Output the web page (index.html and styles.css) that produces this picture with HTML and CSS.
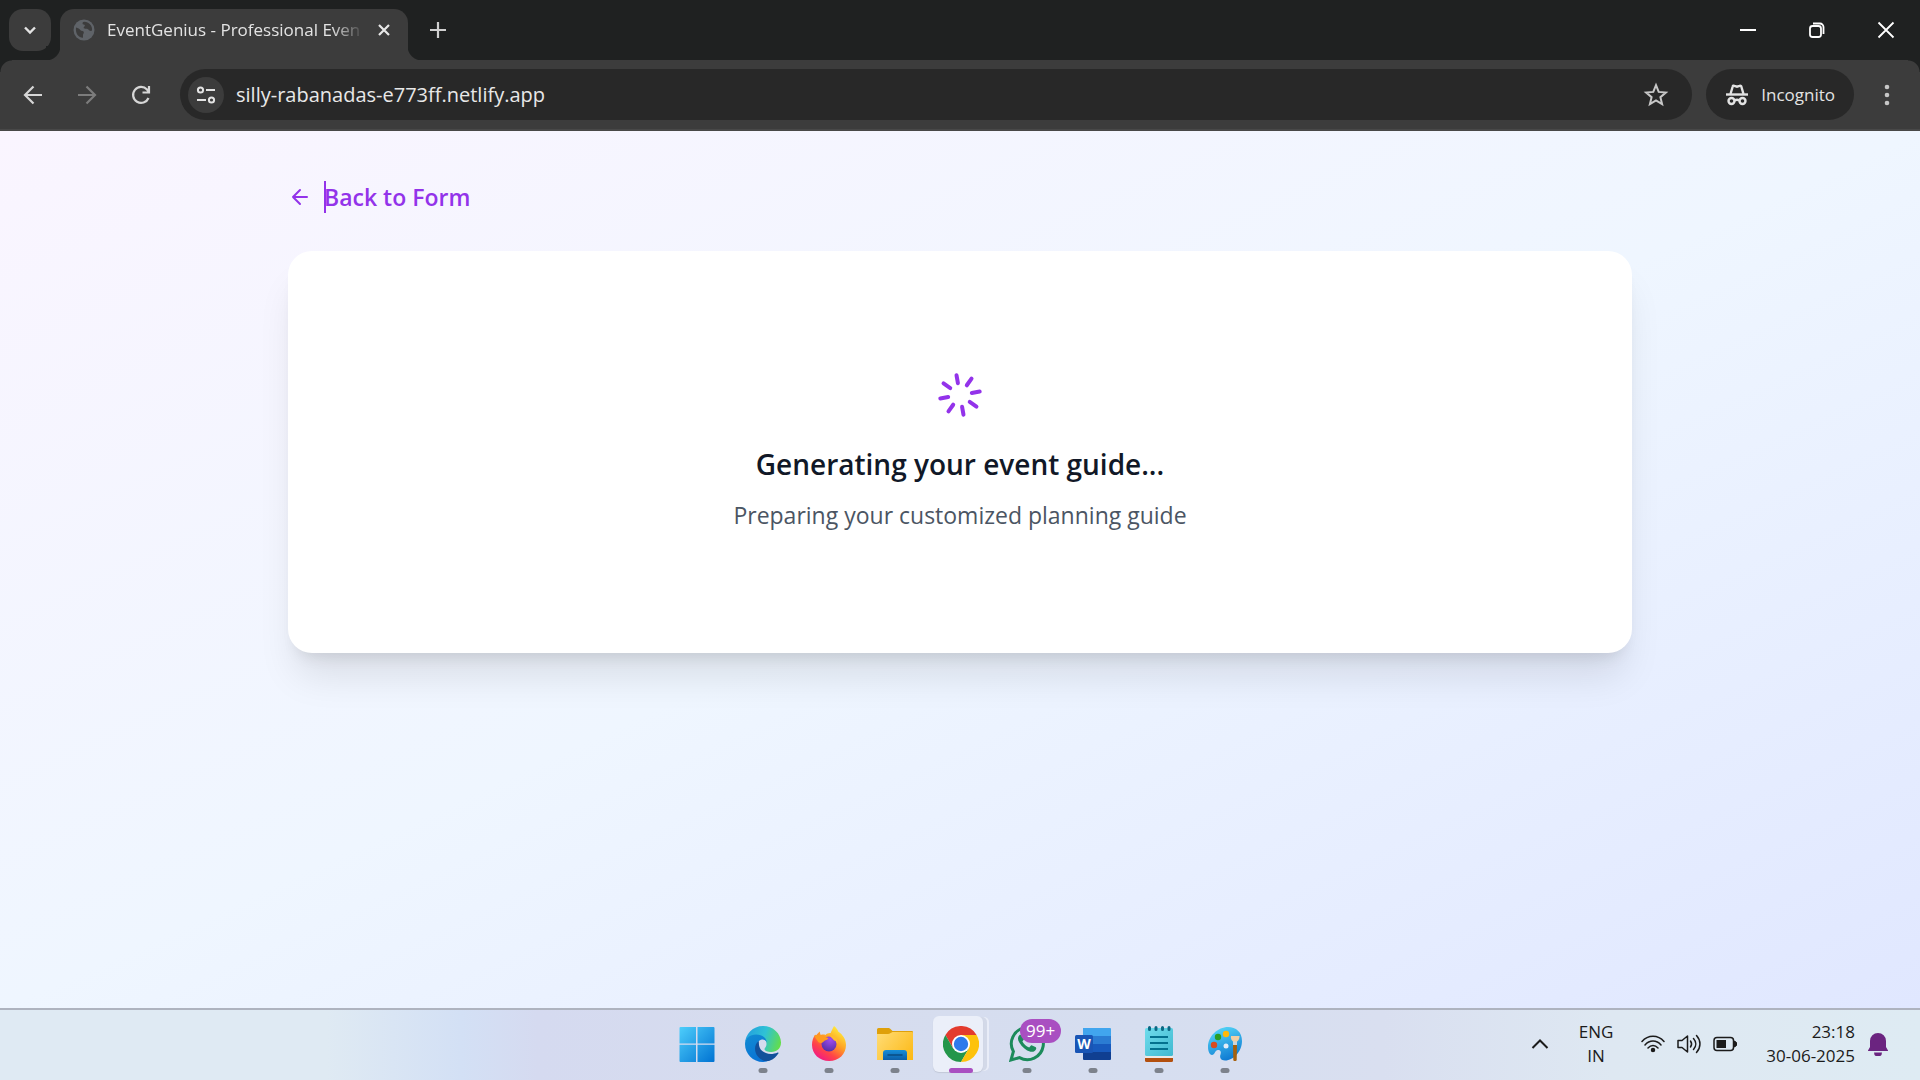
FILE: index.html
```html
<!DOCTYPE html>
<html lang="en">
<head>
  <meta charset="UTF-8" />
  <meta name="viewport" content="width=device-width, initial-scale=1.0">
  <title>EventGenius</title>
  <link rel="stylesheet" href="styles.css">
</head>
<body>
  <!-- Tab strip -->
  <header class="titlebar">
    <button class="tab-search" aria-label="Search tabs">
      <svg width="18" height="18" viewBox="0 0 18 18"><path d="M4 6.5l5 5 5-5" fill="none" stroke="#e3e3e3" stroke-width="2.4"/></svg>
    </button>
    <div class="tab">
      <svg class="favicon" width="22" height="22" viewBox="0 0 22 22">
        <circle cx="11" cy="11" r="10.5" fill="#5f6368"/>
        <path d="M3 8.5c2 .3 3.500 1.500 4.500 2.700 1 1 2.800.5 3.300 1.800.4 1.200-.8 1.700-.8 3v2.800C5.500 18.500 2.300 15 3 8.500zM11 2.800c3 0 5.500 1.400 7 3.800.8 1.500 1.200 3 1 5-1.300 1-3-.2-4-1.300-1.300-1.100-3.500.2-4.300-1.200-.6-1.300 1.300-1.500 1.200-2.700-.1-1.300-2.300-.7-2.400-2 0-.8.700-1.400 1.500-1.600z" fill="#3c3c3c"/>
      </svg>
      <span class="tab-title">EventGenius - Professional Even</span>
      <button class="tab-close" aria-label="Close tab">
        <svg width="16" height="16" viewBox="0 0 16 16"><path d="M3 3l10 10M13 3L3 13" stroke="#e8e8e8" stroke-width="2.2"/></svg>
      </button>
    </div>
    <button class="new-tab" aria-label="New tab">
      <svg width="18" height="18" viewBox="0 0 18 18"><path d="M9 1v16M1 9h16" stroke="#d0d0d0" stroke-width="2.200"/></svg>
    </button>
    <div class="window-controls">
      <button aria-label="Minimize"><svg width="18" height="18" viewBox="0 0 18 18"><path d="M1 9h16" stroke="#fff" stroke-width="2"/></svg></button>
      <button aria-label="Restore"><svg width="18" height="18" viewBox="0 0 18 18" fill="none" stroke="#fff" stroke-width="1.800"><rect x="2" y="5" width="11" height="11" rx="2.500"/><path d="M5 2.500h7a3.500 3.500 0 0 1 3.500 3.500v7"/></svg></button>
      <button aria-label="Close"><svg width="18" height="18" viewBox="0 0 18 18"><path d="M1.500 1.500l15 15M16.500 1.500l-15 15" stroke="#fff" stroke-width="1.800"/></svg></button>
    </div>
  </header>

  <!-- Toolbar -->
  <nav class="toolbar">
    <button class="nav-btn" aria-label="Back">
      <svg width="24" height="24" viewBox="0 0 24 24"><path d="M21 12H4M12.500 3.500L4 12l8.500 8.500" fill="none" stroke="#d6d6d6" stroke-width="2.200"/></svg>
    </button>
    <button class="nav-btn" aria-label="Forward">
      <svg width="24" height="24" viewBox="0 0 24 24"><path d="M3 12h17M11.500 3.500L20 12l-8.500 8.500" fill="none" stroke="#7c7c7c" stroke-width="2.200"/></svg>
    </button>
    <button class="nav-btn" aria-label="Reload">
      <svg width="24" height="24" viewBox="0 0 24 24"><path d="M19.500 15A8 8 0 1 1 18 6.500l2 2.500M20 3v6.500h-6.500" fill="none" stroke="#d6d6d6" stroke-width="2.200"/></svg>
    </button>
    <div class="omnibox">
      <button class="site-info" aria-label="Site information">
        <svg width="20" height="20" viewBox="0 0 20 20" fill="none" stroke="#e3e3e3" stroke-width="2"><circle cx="4.500" cy="5" r="2.600"/><path d="M10 5h9M1 15h9"/><circle cx="15.500" cy="15" r="2.600"/></svg>
      </button>
      <input class="url" type="text" value="silly-rabanadas-e773ff.netlify.app" aria-label="Address">
      <button class="star" aria-label="Bookmark this tab">
        <svg width="26" height="26" viewBox="0 0 26 26"><path d="M13 3.200l2.700 6.700 7.200.6-5.500 4.700 1.700 7-6.100-3.800-6.100 3.800 1.700-7-5.500-4.700 7.200-.6z" fill="none" stroke="#c7c7c7" stroke-width="2"/></svg>
      </button>
    </div>
    <button class="incognito">
      <svg width="24" height="24" viewBox="0 0 24 24" fill="none" stroke="#e3e3e3" stroke-width="2.400"><path d="M1 11.500h22"/><path d="M5.500 11l2.200-7.500c.2-.8 1-1 1.700-.7l2.600.9 2.600-.9c.7-.3 1.500.1 1.700.7L18.500 11"/><circle cx="6.500" cy="18" r="3"/><circle cx="17.500" cy="18" r="3"/><path d="M9.700 17.500c1.500-1 3.100-1 4.600 0"/></svg>
      Incognito
    </button>
    <button class="menu" aria-label="Menu">
      <svg width="24" height="24" viewBox="0 0 24 24" fill="#c7c7c7"><circle cx="12" cy="4" r="2.300"/><circle cx="12" cy="12" r="2.300"/><circle cx="12" cy="20" r="2.300"/></svg>
    </button>
  </nav>

  <!-- Page -->
  <main class="page">
    <div class="container">
      <button class="back-link">
        <svg width="24" height="24" viewBox="0 0 24 24" fill="none" stroke="currentColor" stroke-width="2" stroke-linecap="round" stroke-linejoin="round"><path d="M12 19l-7-7 7-7M19 12H5"/></svg>
        <span class="back-label">Back to Form</span>
      </button>
      <section class="card">
        <svg class="spinner" width="48" height="48" viewBox="0 0 24 24" fill="none" stroke="currentColor" stroke-width="2" stroke-linecap="round"><path d="M12 2v4M16.200 7.800l2.900-2.900M18 12h4M16.200 16.200l2.900 2.900M12 18v4M4.900 19.100l2.900-2.900M2 12h4M4.900 4.900l2.900 2.900"/></svg>
        <h1>Generating your event guide...</h1>
        <p>Preparing your customized planning guide</p>
      </section>
    </div>
  </main>

  <!-- Taskbar -->
  <footer class="taskbar">
    <div class="apps">
      <button class="app" aria-label="Start">
        <svg width="36" height="36" viewBox="0 0 36 36">
          <defs><linearGradient id="win" x1="0" y1="0" x2="36" y2="36" gradientUnits="userSpaceOnUse"><stop offset="0" stop-color="#4fd0fc"/><stop offset="1" stop-color="#0072d2"/></linearGradient></defs>
          <path d="M1.500 1H17v16.500H.5V2a1 1 0 0 1 1-1zM18.500 1h16a1 1 0 0 1 1 1v15.500h-17zM.5 18.800H17V36H1.500a1 1 0 0 1-1-1zM18.500 18.800h17V35a1 1 0 0 1-1 1h-16z" fill="url(#win)"/>
        </svg>
      </button>
      <button class="app running" aria-label="Edge">
        <svg width="36" height="36" viewBox="0 0 36 36">
          <defs>
            <linearGradient id="edgeTop" x1="0" y1="8" x2="36" y2="20" gradientUnits="userSpaceOnUse"><stop offset="0" stop-color="#239fdf"/><stop offset=".5" stop-color="#2fc2d5"/><stop offset="1" stop-color="#67e040"/></linearGradient>
            <linearGradient id="edgeLeft" x1="4" y1="8" x2="16" y2="36" gradientUnits="userSpaceOnUse"><stop offset="0" stop-color="#118bd2"/><stop offset="1" stop-color="#0871d5"/></linearGradient>
          </defs>
          <path d="M0 18C0 8 8 0 18 0s18 7.500 18 16.500c0 6-4.500 9.500-9.500 9.500-4 0-7-1.200-7-3 0-1.200 2-2 2-5 0-5-4-8.500-10-8.500C5 9.500 0 13.500 0 18z" fill="url(#edgeTop)"/>
          <path d="M0 18c0-5.500 5-9.500 11-9.500 6.500 0 10.500 3.500 10.800 8-.9-2-2.600-3.200-4.800-3-4 .5-5.500 5-4 10 1.500 6 6.500 10.500 12 10.500-2 1.300-4.500 2-7 2C8 36 0 28 0 18z" fill="url(#edgeLeft)"/>
          <path d="M14 15c-5 3-5 10.500-1.500 15 3.500 4.500 8 5.800 12 4.800 4-1.400 7-4.300 9-7.500.3-.6-.2-1.100-.8-.8-8 3.500-17 .5-18.500-6.500-.3-1.800-.5-3.500-.2-5z" fill="#11509b"/>
        </svg>
      </button>
      <button class="app running" aria-label="Firefox">
        <svg width="36" height="36" viewBox="0 0 36 36">
          <defs>
            <linearGradient id="foxBody" x1="30" y1="3" x2="8" y2="34" gradientUnits="userSpaceOnUse"><stop offset="0" stop-color="#ffef3d"/><stop offset=".4" stop-color="#ff9f24"/><stop offset=".7" stop-color="#ff4547"/><stop offset="1" stop-color="#f0168b"/></linearGradient>
            <radialGradient id="foxGlobe" cx=".6" cy=".2" r=".8"><stop offset="0" stop-color="#a44cf0"/><stop offset="1" stop-color="#5630a8"/></radialGradient>
          </defs>
          <path d="M23 0c2.200 1.700 3.600 3.500 4.200 5.500 4.500 3 7.800 8 7.800 13.500 0 9-7 16-16.800 16S1 28 1 19c0-4 1.200-8 3.300-10.500L5 10c1-1.800 2.200-3.300 4-4.500-.1 1.500.2 2.700.7 3.500 1.500-.5 3.300-.6 4.800-.1 1.500-1.500 3.500-2.200 5.200-1.900C20.300 5.200 21.500 3 23 0z" fill="url(#foxBody)"/>
          <circle cx="18" cy="18" r="7.500" fill="url(#foxGlobe)"/>
          <path d="M3 10c2-1.500 6-2 9.500 0l5 2.200c-.6 1.500-3.500 1.800-4.800 3.300-1 1.500-3 2-5.200.7z" fill="#ff9a1f"/>
          <path d="M18.500 9.500c5.500-.5 9 3.500 8 8.500-.7-2-1.900-3.300-3.500-3.500-1.500-2.300-2.800-3-4.500-5z" fill="#ffbd2e"/>
        </svg>
      </button>
      <button class="app running" aria-label="File Explorer">
        <svg width="36" height="36" viewBox="0 0 36 36">
          <defs>
            <linearGradient id="folder" x1="0" y1="5" x2="36" y2="34" gradientUnits="userSpaceOnUse"><stop offset="0" stop-color="#ffdd78"/><stop offset="1" stop-color="#fcb813"/></linearGradient>
            <linearGradient id="folderDock" x1="0" y1="0" x2="0" y2="1"><stop offset="0" stop-color="#168ed9"/><stop offset="1" stop-color="#0c5ea8"/></linearGradient>
          </defs>
          <path d="M0 3.500A1.500 1.500 0 0 1 1.500 2h10c.8 0 1.200.3 1.700.8L15.500 5H35a1 1 0 0 1 1 1v4H0z" fill="#dfa00a"/>
          <path d="M0 8h11c1 0 1.600-.3 2.200-.8L15.500 6H35a1 1 0 0 1 1 1v27H0z" fill="url(#folder)"/>
          <path d="M6 34v-7a3 3 0 0 1 3-3h18a3 3 0 0 1 3 3v7z" fill="url(#folderDock)"/>
          <path d="M11 29h14" stroke="#0a4c83" stroke-width="1.500" stroke-linecap="round"/>
        </svg>
      </button>
      <button class="app running active" aria-label="Chrome">
        <svg width="36" height="36" viewBox="0 0 36 36">
          <path d="M18 9h15.600A18 18 0 0 0 2.400 9l7.800 13.500z" fill="#e33b2e"/>
          <path d="M10.200 22.500L2.400 9A18 18 0 0 0 18 36l7.800-13.500z" fill="#24964a"/>
          <path d="M25.800 22.500L18 36A18 18 0 0 0 33.600 9H18z" fill="#fdc20c"/>
          <circle cx="18" cy="18" r="9" fill="#fff"/><circle cx="18" cy="18" r="7.200" fill="#2d7aeb"/>
        </svg>
      </button>
      <button class="app running" aria-label="WhatsApp">
        <svg width="36" height="36" viewBox="0 0 36 36">
          <path d="M2 34l2.400-8.500A16 16 0 1 1 10.500 31.600z" fill="none" stroke="#1c8b5b" stroke-width="3"/>
          <path d="M12.500 9.500c-.6-.9-1.500-.8-2.200-.2-1.800 1.800-1.700 4.500 0 7.200 2.700 4.500 6.500 8 11.200 9.200 2.600.6 5.200-.6 5.700-3 .1-.8-.1-1.200-.8-1.600l-3.300-1.600c-.7-.3-1.100-.2-1.600.4l-1.300 1.600c-3-1-5.600-3.500-6.800-6l1.400-1.900c.3-.5.3-.8.1-1.300z" fill="#1c8b5b"/>
        </svg>
        <span class="badge">99+</span>
      </button>
      <button class="app running" aria-label="Word">
        <svg width="36" height="36" viewBox="0 0 36 36">
          <path d="M8 2h27a1 1 0 0 1 1 1v7H8z" fill="#41a5ee"/><path d="M8 10h28v8H8z" fill="#2b7cd3"/><path d="M8 18h28v8H8z" fill="#185abd"/><path d="M8 26h28v7a1 1 0 0 1-1 1H9a1 1 0 0 1-1-1z" fill="#103f91"/>
          <rect x="0" y="9" width="18" height="18" rx="1.500" fill="#1955b5"/>
          <text x="9" y="23" text-anchor="middle" class="word-letter">W</text>
        </svg>
      </button>
      <button class="app running" aria-label="Notepad">
        <svg width="36" height="36" viewBox="0 0 36 36">
          <defs><linearGradient id="note" x1="0" y1="0" x2="1" y2="1"><stop offset="0" stop-color="#6fdcec"/><stop offset="1" stop-color="#41b9d1"/></linearGradient></defs>
          <path d="M4 31h28v3.500a1.500 1.500 0 0 1-1.500 1.500h-25A1.500 1.500 0 0 1 4 34.500z" fill="#b3500f"/>
          <path d="M4 28h28v4H4z" fill="#ece9e6"/>
          <rect x="4" y="2" width="28" height="28" rx="1.500" fill="url(#note)"/>
          <path d="M9 11h18M9 17h18M9 23h18" stroke="#04718f" stroke-width="2"/>
          <path d="M8.500 1.500v2M15 1.500v2M21.500 1.500v2M28 1.500v2" stroke="#0c6884" stroke-width="3" stroke-linecap="round"/>
        </svg>
      </button>
      <button class="app running" aria-label="Paint">
        <svg width="36" height="36" viewBox="0 0 36 36">
          <defs><linearGradient id="paint" x1="8" y1="2" x2="20" y2="35" gradientUnits="userSpaceOnUse"><stop offset="0" stop-color="#55d6f7"/><stop offset="1" stop-color="#0d79d2"/></linearGradient></defs>
          <path d="M21 1C11 1 1 10 1 21c0 4 1.500 8 4 8 2.800 0 3-5 6-5 2.500 0 3.500 2 2.500 4.500-1.200 3 .5 6 4.500 6C27 34.500 35 25 35 15 35 6 29 1 21 1z" fill="url(#paint)"/>
          <circle cx="19" cy="20" r="2.500" fill="#e2edf8"/>
          <circle cx="7" cy="19" r="3.200" fill="#d84b1e"/><circle cx="11" cy="11" r="3.200" fill="#2a9d22"/><circle cx="19" cy="8" r="3.200" fill="#ffb90a"/>
          <path d="M26 18h4l-.3 16c0 1.300-3.400 1.300-3.400 0z" fill="#a6610e"/><path d="M26 15h4v4h-4z" fill="#cdd4d8"/><path d="M24 10h8.500c0 3-1 4.500-2.500 5.500h-4c-1.500-1-2.500-3-2-5.500z" fill="#f0cfa4"/>
        </svg>
      </button>
    </div>

    <div class="tray">
      <button class="tray-btn chevron" aria-label="Show hidden icons">
        <svg width="18" height="18" viewBox="0 0 18 18"><path d="M1.500 13L9 5.500l7.500 7.500" fill="none" stroke="#1b1b1b" stroke-width="2"/></svg>
      </button>
      <button class="tray-btn language">ENG<br>IN</button>
      <button class="tray-btn status" aria-label="Network, sound and battery">
        <svg width="24" height="24" viewBox="0 0 24 24" fill="none" stroke="#1b1b1b" stroke-width="1.500" stroke-linecap="round"><path d="M1 9.500C7 2.500 17 2.500 23 9.500M4 13c4.500-5.200 11.500-5.200 16 0M7 16c3-3.200 7-3.200 10 0"/><circle cx="12" cy="18" r="1.500" fill="#1b1b1b" stroke="#1b1b1b"/></svg>
        <svg width="24" height="24" viewBox="0 0 24 24" fill="none" stroke="#1b1b1b" stroke-width="1.500" stroke-linecap="round" stroke-linejoin="round"><path d="M1 8.500h4L10.500 4v16L5 15.500H1z"/><path d="M13.500 9c1.300 1.800 1.300 4.200 0 6M16.500 6.500c3 3.300 3 7.700 0 11M19.500 3.500c4.600 5 4.600 12 0 17"/></svg>
        <svg width="24" height="24" viewBox="0 0 24 24"><rect x="1" y="5.500" width="19.500" height="13" rx="3" fill="none" stroke="#1b1b1b" stroke-width="1.500"/><rect x="3.500" y="8" width="9.500" height="8" fill="#1b1b1b"/><path d="M21.500 9v6l2-1.500v-3z" fill="#1b1b1b" stroke="#1b1b1b"/></svg>
      </button>
      <button class="tray-btn clock">23:18<br>30-06-2025</button>
      <button class="tray-btn bell" aria-label="Notifications">
        <svg width="22" height="24" viewBox="0 0 22 24" fill="#6b2480"><path d="M11 1a8 8 0 0 1 8 8v6l2 3.500V19H1v-.5L3 15V9a8 8 0 0 1 8-8z"/><path d="M7 20.500h8a4 4 0 0 1-8 0z"/></svg>
      </button>
    </div>
  </footer>
</body>
</html>
```
FILE: styles.css
```css
* {
  box-sizing: border-box;
}
body {
  margin: 0;
  min-height: 100vh;
  display: flex;
  flex-direction: column;
  font-family: "Segoe UI", "Open Sans", "Noto Sans", sans-serif;
}
button {
  display: flex;
  align-items: center;
  justify-content: center;
  margin: 0;
  padding: 0;
  border: none;
  background: none;
  color: inherit;
  font: inherit;
  cursor: pointer;
}
svg {
  display: block;
  flex-shrink: 0;
}

/* Tab strip */
.titlebar {
  display: flex;
  height: 60px;
  padding: 9px 0 0 9px;
  background-color: #1f2121;
}
.tab-search {
  width: 42px;
  height: 42px;
  border-radius: 14px;
  background-color: #3c3c3c;
}
.tab {
  position: relative;
  display: flex;
  align-items: center;
  width: 348px;
  margin-left: 9px;
  padding: 0 12px 9px 13px;
  border-radius: 14px 14px 0 0;
  background-color: #3c3c3c;
  color: #e3e3e3;
}
/* Flared feet of the active tab */
.tab::before,
.tab::after {
  content: "";
  position: absolute;
  bottom: 0;
  width: 14px;
  height: 14px;
}
.tab::before {
  right: 100%;
  background: radial-gradient(circle at 0 0, #1f2121 14px, #3c3c3c 15px);
}
.tab::after {
  left: 100%;
  background: radial-gradient(circle at 100% 0, #1f2121 14px, #3c3c3c 15px);
}
.tab-title {
  flex: 1;
  margin: 0 8px 0 12px;
  white-space: nowrap;
  font-size: 17px;
  line-height: 24px;
  -webkit-mask-image: linear-gradient(to left, transparent, #000 32px);
  mask-image: linear-gradient(to left, transparent, #000 32px);
}
.tab-close {
  width: 24px;
  height: 24px;
}
.new-tab {
  width: 42px;
  height: 42px;
  margin-left: 9px;
}
.window-controls {
  display: flex;
  margin-left: auto;
}
.window-controls button {
  width: 69px;
  height: 42px;
}

/* Toolbar */
.toolbar {
  position: relative;
  display: flex;
  align-items: center;
  height: 71px;
  padding: 0 12px;
  border-bottom: 2px solid #484848;
  background-color: #3c3c3c;
}
.toolbar::before,
.toolbar::after {
  content: "";
  position: absolute;
  top: 0;
  width: 12px;
  height: 12px;
}
.toolbar::before {
  left: 0;
  background: radial-gradient(circle at 100% 100%, #3c3c3c 11px, #1f2121 12px);
}
.toolbar::after {
  right: 0;
  background: radial-gradient(circle at 0 100%, #3c3c3c 11px, #1f2121 12px);
}
.nav-btn {
  width: 42px;
  height: 42px;
  margin-right: 12px;
}
.omnibox {
  flex: 1;
  display: flex;
  align-items: center;
  height: 51px;
  margin: 0 14px 0 6px;
  padding: 0 18px 0 8px;
  border-radius: 26px;
  background-color: #282828;
}
.site-info {
  width: 36px;
  height: 36px;
  border-radius: 50%;
  background-color: #3c3c3c;
}
.url {
  flex: 1;
  margin-left: 12px;
  padding: 0;
  border: none;
  outline: none;
  background: none;
  color: #e8e8e8;
  font-family: inherit;
  font-size: 20px;
}
.star {
  width: 36px;
  height: 36px;
}
.incognito {
  gap: 12px;
  height: 51px;
  padding: 0 19px;
  border-radius: 26px;
  background-color: #282828;
  color: #e3e3e3;
  font-size: 17px;
}
.menu {
  width: 42px;
  height: 42px;
  margin-left: 12px;
}

/* Page */
.page {
  flex: 1;
  padding: 48px;
  background: linear-gradient(to bottom right, #faf5ff, #eff6ff, #e0e7ff);
}
.container {
  max-width: 1344px;
  margin: 0 auto;
}
.back-link {
  gap: 12px;
  margin-bottom: 36px;
  color: #9333ea;
  font-size: 23px;
  line-height: 36px;
  font-weight: 600;
}
.back-label {
  position: relative;
}
/* Text caret before the label */
.back-label::before {
  content: "";
  position: absolute;
  left: 0;
  top: 2px;
  width: 2px;
  height: 32px;
  background-color: #9333ea;
}
.card {
  padding: 120px 48px;
  border-radius: 24px;
  background-color: #fff;
  text-align: center;
  box-shadow: 0 30px 38px -8px rgba(0, 0, 0, 0.1), 0 12px 15px -9px rgba(0, 0, 0, 0.1);
}
.spinner {
  margin: 0 auto 24px;
  color: #9333ea;
  transform: rotate(-10deg);
}
.card h1 {
  margin: 0 0 12px;
  color: #111827;
  font-size: 28px;
  line-height: 42px;
  font-weight: 600;
}
.card p {
  margin: 0;
  color: #4b5563;
  font-size: 23px;
  line-height: 36px;
}

/* Taskbar */
.taskbar {
  display: grid;
  grid-template-columns: 1fr auto 1fr;
  height: 72px;
  border-top: 2px solid #aeb3bf;
  background: linear-gradient(to right, #dfeaf3 0%, #dfeaf3 17%, #d3e0f5 24%, #d5daf0 28%, #d6dcee 40%, #d6def0 60%, #d9dff0 72%, #dee8f2 84%, #deebf3 100%);
  color: #1b1b1b;
}
.apps {
  grid-column: 2;
  display: flex;
  padding-left: 2px;
}
.app {
  position: relative;
  width: 66px;
  height: 70px;
  padding-bottom: 2px;
}
/* Running indicator */
.running::after {
  content: "";
  position: absolute;
  left: 50%;
  bottom: 7px;
  width: 9px;
  height: 5px;
  border-radius: 3px;
  background-color: #7d828c;
  transform: translateX(-50%);
}
.active::after {
  width: 24px;
  background-color: #a94fc1;
}
.active::before {
  content: "";
  position: absolute;
  left: 5px;
  top: 6px;
  width: 50px;
  height: 56px;
  border-radius: 6px;
  background-color: #ebeff9;
  box-shadow: 0 1px 1px #c2c8d8, 5px 0 0 -1px #d3d9e8, 7px 0 0 -1px #e9edf8;
}
.active svg {
  position: relative;
}
.badge {
  position: absolute;
  left: 26px;
  top: 9px;
  padding: 0 6px;
  border-radius: 12px;
  background-color: #a94fc1;
  color: #fff;
  font-size: 17px;
  line-height: 24px;
}
.word-letter {
  fill: #fff;
  font-size: 14px;
  font-weight: 700;
}
.tray {
  grid-column: 3;
  display: flex;
  align-items: center;
  justify-content: flex-end;
  padding: 0 31px 2px 0;
}
.tray-btn {
  font-size: 17px;
  line-height: 24px;
}
.chevron {
  margin-right: 30px;
}
.language {
  margin-right: 28px;
}
.status {
  gap: 12px;
  margin-right: 29px;
}
.clock {
  margin-right: 12px;
  text-align: right;
}
```
